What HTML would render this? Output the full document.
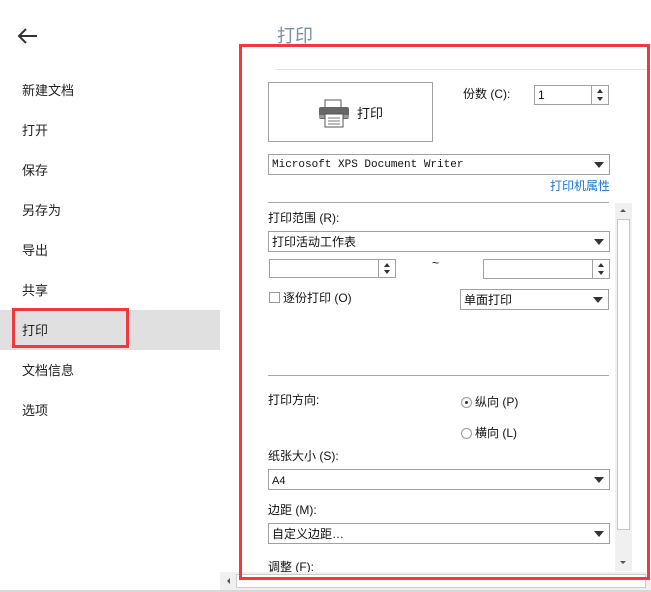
<!DOCTYPE html>
<html><head><meta charset="utf-8"><style>
*{margin:0;padding:0;box-sizing:border-box}
body{width:651px;height:592px;position:relative;overflow:hidden;background:#fff;font-family:"Liberation Sans","Noto Sans CJK SC",sans-serif;font-size:13px;color:#222}
.a{position:absolute}
.mi{position:absolute;left:22px;font-size:13px;line-height:16px}
.box{position:absolute;border:1px solid #a0a0a0;background:#fff}
.t{position:absolute;font-size:12px;line-height:14px;color:#111;white-space:nowrap}
.dd::after{content:"";position:absolute;right:5px;top:50%;margin-top:-3px;border-left:5px solid transparent;border-right:5px solid transparent;border-top:6px solid #333}
.sp{position:absolute;right:0;top:0;bottom:0;width:17px;border-left:1px solid #a0a0a0}
.sp::before{content:"";position:absolute;left:5px;top:3px;border-left:3px solid transparent;border-right:3px solid transparent;border-bottom:4px solid #333}
.sp::after{content:"";position:absolute;left:5px;bottom:3px;border-left:3px solid transparent;border-right:3px solid transparent;border-top:4px solid #333}
</style></head><body>
<svg class="a" style="left:17px;top:27px" width="22" height="18" viewBox="0 0 22 18"><path d="M2 9H20M9 2L2 9L9 16" stroke="#333" stroke-width="2" fill="none"/></svg>
<div class="mi" style="top:83px">新建文档</div>
<div class="mi" style="top:123px">打开</div>
<div class="mi" style="top:163px">保存</div>
<div class="mi" style="top:203px">另存为</div>
<div class="mi" style="top:243px">导出</div>
<div class="mi" style="top:283px">共享</div>
<div class="a" style="left:0;top:310px;width:220px;height:40px;background:#e0e0e0"></div>
<div class="a" style="left:12px;top:308px;width:117px;height:40px;border:3px solid #f0393d"></div>
<div class="mi" style="top:323px">打印</div>
<div class="mi" style="top:363px">文档信息</div>
<div class="mi" style="top:403px">选项</div>

<div class="a" style="left:277px;top:25px;font-size:18px;line-height:22px;color:#7a8ea8">打印</div>
<div class="a" style="left:276px;top:69px;width:375px;height:1px;background:#e3e3e3"></div>

<div class="box" style="left:268px;top:82px;width:165px;height:60px"></div>
<svg class="a" style="left:318px;top:99px" width="32" height="30" viewBox="0 0 32 30"><rect x="7" y="1" width="16" height="8" fill="#fff" stroke="#555"/><rect x="1" y="8" width="30" height="12" rx="2" fill="#666"/><rect x="1" y="16" width="30" height="3" fill="#999"/><rect x="7" y="15" width="18" height="13" fill="#fff" stroke="#555"/><path d="M10 19H22M10 22H22M10 25H22" stroke="#777"/></svg>
<div class="t" style="left:357px;top:107px;font-size:13px">打印</div>
<div class="t" style="left:463px;top:87px">份数 (C):</div>
<div class="box" style="left:534px;top:85px;width:75px;height:20px"><div class="t" style="left:3px;top:2px">1</div><div class="sp"></div></div>
<div class="box dd" style="left:268px;top:154px;width:342px;height:21px"><div class="t" style="left:3px;top:3px;font-family:'Liberation Mono',monospace;font-size:11px">Microsoft XPS Document Writer</div></div>
<div class="t" style="left:550px;top:179px;color:#1a73d9">打印机属性</div>
<div class="a" style="left:268px;top:202px;width:341px;height:1px;background:#aaa"></div>

<div class="a" style="left:615px;top:203px;width:17px;height:368px;background:#f0f0f0"></div>
<div class="a" style="left:617px;top:219px;width:13px;height:311px;background:#fff;border:1px solid #c8c8c8"></div>
<div class="a" style="left:620px;top:209px;border-left:3px solid transparent;border-right:3px solid transparent;border-bottom:3px solid #555"></div>
<div class="a" style="left:620px;top:561px;border-left:3px solid transparent;border-right:3px solid transparent;border-top:3px solid #555"></div>

<div class="t" style="left:268px;top:211px">打印范围 (R):</div>
<div class="box dd" style="left:268px;top:231px;width:342px;height:21px"><div class="t" style="left:3px;top:3px">打印活动工作表</div></div>
<div class="box" style="left:269px;top:259px;width:127px;height:19px"><div class="sp"></div></div>
<div class="t" style="left:432px;top:256px">~</div>
<div class="box" style="left:483px;top:259px;width:127px;height:20px"><div class="sp"></div></div>
<div class="a" style="left:269px;top:292px;width:11px;height:11px;border:1px solid #999"></div>
<div class="t" style="left:283px;top:291px">逐份打印 (O)</div>
<div class="box dd" style="left:460px;top:289px;width:149px;height:21px"><div class="t" style="left:3px;top:3px">单面打印</div></div>
<div class="a" style="left:268px;top:375px;width:341px;height:1px;background:#aaa"></div>

<div class="t" style="left:268px;top:393px">打印方向:</div>
<div class="a" style="left:461px;top:397px;width:11px;height:11px;border:1px solid #999;border-radius:50%"><div class="a" style="left:3px;top:3px;width:3px;height:3px;background:#333;border-radius:50%"></div></div>
<div class="t" style="left:475px;top:395px">纵向 (P)</div>
<div class="a" style="left:461px;top:428px;width:11px;height:11px;border:1px solid #999;border-radius:50%"></div>
<div class="t" style="left:475px;top:426px">横向 (L)</div>
<div class="t" style="left:268px;top:449px">纸张大小 (S):</div>
<div class="box dd" style="left:268px;top:469px;width:342px;height:21px"><div class="t" style="left:3px;top:4px;font-size:11px">A4</div></div>
<div class="t" style="left:268px;top:503px">边距 (M):</div>
<div class="box dd" style="left:268px;top:523px;width:342px;height:21px"><div class="t" style="left:3px;top:3px">自定义边距…</div></div>
<div class="t" style="left:268px;top:560px">调整 (F):</div>

<div class="a" style="left:220px;top:572px;width:431px;height:18px;background:#f0f0f0"></div>
<div class="a" style="left:236px;top:574px;width:410px;height:14px;background:#fff;border:1px solid #ccc"></div>
<div class="a" style="left:227px;top:578px;border-top:3px solid transparent;border-bottom:3px solid transparent;border-right:3px solid #555"></div>
<div class="a" style="left:0;top:590px;width:651px;height:2px;background:#d8d8d8"></div>

<div class="a" style="left:239px;top:44px;width:411px;height:536px;border:3px solid #f0393d"></div>
</body></html>
